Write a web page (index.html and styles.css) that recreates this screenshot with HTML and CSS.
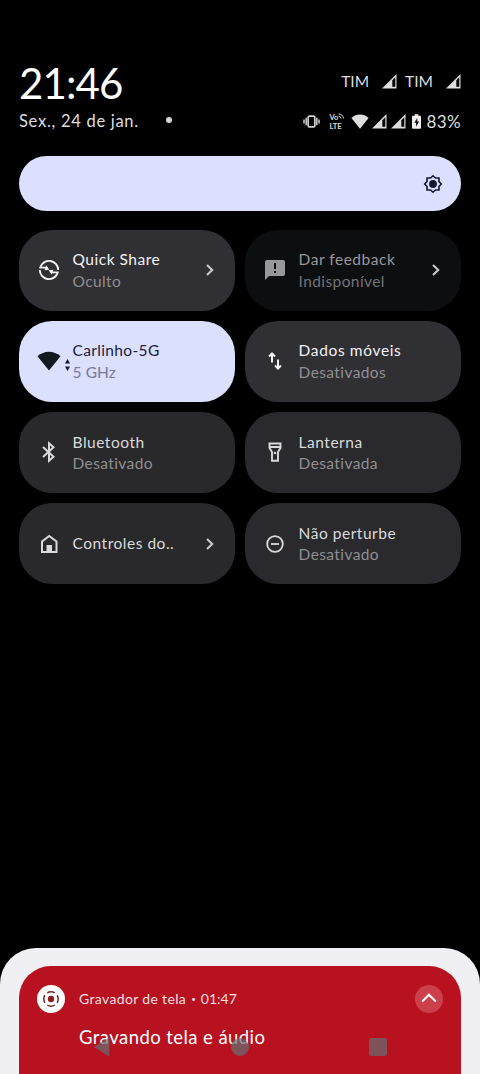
FILE: index.html
```
<!DOCTYPE html>
<html lang="pt-BR">
<head>
<meta charset="utf-8">
<title>Configurações rápidas</title>
<link rel="stylesheet" href="styles.css">
</head>
<body>
<svg class="defs" aria-hidden="true">
  <symbol id="signal" viewBox="0 0 15 15"><path d="M0 14.500 14.500 0v14.500z" fill="#dededf"/><path d="M10.300 6.200 13.300 3.200v9.600h-3z" fill="#08080a"/></symbol>
  <symbol id="chevron" viewBox="0 0 10 14"><path d="M2 2l5.200 5L2 12" fill="none" stroke="currentColor" stroke-width="2.100"/></symbol>
  <symbol id="wifi" viewBox="0 0 24 20"><path d="M.5 5.200C7.200-.8 16.800-.8 23.500 5.200L12 19.500z" fill="currentColor"/></symbol>
</svg>
<div class="screen">
  <header class="status">
    <div class="status-row top">
      <div class="clock">21:46</div>
      <div class="carriers">
        <span class="carrier">TIM</span><svg class="sig"><use href="#signal"/></svg>
        <span class="carrier second">TIM</span><svg class="sig"><use href="#signal"/></svg>
      </div>
    </div>
    <div class="status-row bottom">
      <div class="date">Sex., 24 de jan.</div>
      <span class="dot"></span>
      <div class="indicators">
        <svg class="vibrate" viewBox="0 0 17 13" fill="none" stroke="#cfcfd1"><rect x="5.200" y="1.200" width="6.600" height="10.600" rx="1" stroke-width="1.700"/><path d="M3.200 2.800v7.400M13.800 2.800v7.400" stroke-width="1.500"/><path d="M1 4.500v4M16 4.500v4" stroke-width="1.500"/></svg>
        <div class="volte"><span>Vo<svg viewBox="0 0 6 6" fill="none" stroke="#cfcfd1"><path d="M.5 1q4.500 0 5 4.500M.5 3q2 0 2.500 2.500" stroke-width="1"/></svg></span><span>LTE</span></div>
        <svg class="wifi-small"><use href="#wifi"/></svg>
        <svg class="sig a"><use href="#signal"/></svg>
        <svg class="sig b"><use href="#signal"/></svg>
        <svg class="battery" viewBox="0 0 10 16"><path d="M3 0h4v1.500h2q1 0 1 1V15q0 1-1 1H1q-1 0-1-1V2.500q0-1 1-1h2z" fill="#f0f0f0"/><path d="M5.800 4 2.500 9.500h2v4.300L7.800 8h-2z" fill="#111"/></svg>
        <span class="percent">83%</span>
      </div>
    </div>
  </header>

  <div class="brightness">
    <svg viewBox="0 0 24 24"><path d="M12 3l2.700 2.500h3.800v3.800L21 12l-2.500 2.700v3.800h-3.800L12 21l-2.700-2.500H5.500v-3.800L3 12l2.500-2.700V5.500h3.800z" fill="none" stroke="#151b2e" stroke-width="1.800"/><circle cx="12" cy="12" r="4.300" fill="#151b2e"/></svg>
  </div>

  <main class="tiles">
    <section class="tile bright">
      <svg class="icon" viewBox="0 0 24 24" fill="none" stroke="currentColor" stroke-width="1.900"><path d="M3.400 8.800A9.200 9.200 0 0 1 21.200 12M20.600 15.200A9.200 9.200 0 0 1 2.800 12"/><path d="M2.300 9.600h6.500l1.500 1M21.700 14.400h-6.500l-1.500-1"/><path d="M9.300 7.300l3 4.500-4.700.4zM14.700 16.700l-3-4.500 4.700-.4z" fill="currentColor" stroke="none"/></svg>
      <div class="label"><span class="title">Quick Share</span><span class="sub">Oculto</span></div>
      <svg class="chev"><use href="#chevron"/></svg>
    </section>
    <section class="tile disabled">
      <svg class="icon" viewBox="0 0 24 24"><path d="M4 2h16q2 0 2 2v12q0 2-2 2H6l-4 4V4q0-2 2-2z" fill="#98989a"/><path d="M11 5h2v6h-2zM11 13h2v2h-2z" fill="#09090a"/></svg>
      <div class="label"><span class="title">Dar feedback</span><span class="sub">Indisponível</span></div>
      <svg class="chev"><use href="#chevron"/></svg>
    </section>
    <section class="tile active">
      <svg class="icon wifi"><use href="#wifi"/></svg>
      <svg class="traffic" viewBox="0 0 5 12"><path d="M2.500 0 5 4.500H0zM0 7.500h5L2.500 12z" fill="#151b26"/></svg>
      <div class="label tight"><span class="title">Carlinho-5G</span><span class="sub">5 GHz</span></div>
    </section>
    <section class="tile bright">
      <svg class="icon" viewBox="0 0 24 24" fill="none" stroke="currentColor" stroke-width="2"><path d="M9 13.500V5M6 7.500l3-3 3 3M15 10.500V19M12 16.500l3 3 3-3"/></svg>
      <div class="label wide"><span class="title">Dados móveis</span><span class="sub">Desativados</span></div>
    </section>
    <section class="tile dim">
      <svg class="icon" viewBox="0 0 24 24" fill="none" stroke="currentColor" stroke-width="2"><path d="M6 7l10.500 9.700-4.500 4v-17.400l4.500 4L6 17"/></svg>
      <div class="label"><span class="title">Bluetooth</span><span class="sub">Desativado</span></div>
    </section>
    <section class="tile dim violet">
      <svg class="icon" viewBox="0 0 24 24" fill="none" stroke="currentColor" stroke-width="1.900"><path d="M6.500 3.500h11v4.500l-2.500 4v8.700H9V12L6.500 8zM6.500 7h11"/><circle cx="12" cy="13" r="1.300" fill="currentColor" stroke="none"/></svg>
      <div class="label"><span class="title">Lanterna</span><span class="sub">Desativada</span></div>
    </section>
    <section class="tile dim">
      <svg class="icon" viewBox="0 0 24 24" fill="none" stroke="currentColor" stroke-width="2"><path d="M5 20V9.500L12.200 4l7.300 5.500V20z"/><path d="M9.500 13h5.500v7H9.500z" fill="currentColor" stroke="none"/></svg>
      <div class="label"><span class="title">Controles do..</span></div>
      <svg class="chev"><use href="#chevron"/></svg>
    </section>
    <section class="tile dim violet">
      <svg class="icon" viewBox="0 0 24 24" fill="none" stroke="currentColor" stroke-width="1.800"><circle cx="12" cy="12" r="7.800"/><path d="M8 12h8"/></svg>
      <div class="label"><span class="title">Não perturbe</span><span class="sub">Desativado</span></div>
    </section>
  </main>

  <div class="sheet">
    <article class="notice">
      <div class="notice-head">
        <svg class="app" viewBox="0 0 28 28"><circle cx="14" cy="14" r="14" fill="#fff"/><circle cx="14" cy="14" r="3.200" fill="#8f1822"/><circle cx="14" cy="14" r="7.200" fill="none" stroke="#74252b" stroke-width="1.500" pathLength="80" stroke-dasharray="14 6" stroke-dashoffset="7"/></svg>
        <span class="app-name">Gravador de tela</span><span class="sep">•</span><span class="timer">01:47</span>
        <svg class="collapse" viewBox="0 0 28 28"><circle cx="14" cy="14" r="14" fill="#cc404c"/><path d="M7.200 16.500 14 9.700l6.800 6.800" fill="none" stroke="#fff" stroke-width="2"/></svg>
      </div>
      <p class="message">Gravando tela e áudio</p>
    </article>
  </div>
  <nav class="navbar">
    <svg viewBox="0 0 18 22"><path d="M0 11 16 1q1-.5 1 1v18q0 1.500-1 1z"/></svg>
    <svg viewBox="0 0 20 20"><circle cx="10" cy="10" r="10"/></svg>
    <svg viewBox="0 0 18 18"><rect width="18" height="18" rx="2.500"/></svg>
  </nav>
</div>
</body>
</html>
```
FILE: styles.css
```
* { box-sizing: border-box; }
body { margin: 0; background: #000; font-family: Lato, "Open Sans", sans-serif; font-variant-ligatures: none; }
svg { display: block; flex: none; }
.defs { position: absolute; width: 0; height: 0; }
.screen { position: relative; width: 480px; height: 1074px; overflow: hidden; padding: 60px 19px 0; display: flex; flex-direction: column; background: #000; }

.status { height: 96px; color: #dededf; }
.status-row { display: flex; align-items: center; }
.top { height: 46px; justify-content: space-between; }
.clock { font-size: 42px; line-height: 46px; color: #fff; letter-spacing: -0.900px; }
.carriers { display: flex; align-items: center; height: 42px; font-size: 15.500px; padding-bottom: 4px; }
.carrier { margin-right: 13px; }
.second { margin-left: 8px; }
.sig { width: 15px; height: 15px; }
.bottom { height: 30px; }
.date { width: 120px; font-size: 16.500px; white-space: nowrap; letter-spacing: 0.720px; }
.dot { width: 6px; height: 6px; border-radius: 50%; background: #d6d6d8; margin: -2px 0 0 27px; }
.indicators { display: flex; align-items: center; margin-left: auto; }
.vibrate { width: 17px; height: 13px; }
.volte { display: flex; flex-direction: column; width: 16px; margin-left: 9px; font-size: 7.500px; line-height: 9px; font-weight: 700; }
.volte span { display: flex; height: 8px; }
.volte span + span { margin-top: 1px; }
.volte svg { width: 6px; height: 6px; }
.wifi-small { width: 18px; height: 15px; margin-left: 6px; }
.a { margin-left: 3px; }
.b { margin-left: 4px; }
.battery { width: 9px; height: 15px; margin-left: 6px; }
.percent { margin-left: 5px; font-size: 17px; letter-spacing: 0.400px; }

.brightness { height: 55px; border-radius: 28px; background: #dcdfff; display: flex; align-items: center; justify-content: flex-end; padding-right: 17px; }
.brightness svg { width: 22px; height: 22px; }

.tiles { display: grid; grid-template-columns: 1fr 1fr; grid-auto-rows: 81px; gap: 10.200px; margin-top: 18.500px; }
.tile { position: relative; display: flex; align-items: center; padding: 0 20px 0 18px; border-radius: 33px; }
.bright { background: #302f34; color: #f2f2f4; }
.dim { background: #29292b; color: #dadadb; }
.violet { background: #2a292d; }
.disabled { background: #0d0e10; color: #98989a; }
.active { background: #dce0ff; color: #1a2142; }
.icon { width: 24px; height: 24px; }
.wifi { height: 20px; color: #121a20; }
.traffic { position: absolute; left: 46px; top: 38px; width: 5px; height: 12px; }
.label { display: flex; flex-direction: column; margin-left: 11.500px; padding-top: 1px; font-size: 15.500px; line-height: 21.300px; white-space: nowrap; letter-spacing: 0.400px; }
.title { letter-spacing: 0.520px; }
.tight .title { letter-spacing: 0.350px; }
.tight .sub { letter-spacing: 0.100px; }
.wide .title { letter-spacing: 0.640px; }
.sub { color: #8f8f92; }
.disabled .sub { color: #737376; }
.active .sub { color: #77799a; }
.chev { width: 10px; height: 14px; margin-left: auto; color: #c9c9cc; }

.sheet { position: absolute; left: 0; right: 0; bottom: 0; height: 126px; padding: 18px 19px 0; background: #f0eff4; border-radius: 36px 36px 0 0; }
.notice { height: 108px; padding: 18.500px 18px 0; background: #b81120; border-radius: 32px 32px 0 0; color: #fff; }
.notice-head { display: flex; align-items: center; height: 28px; font-size: 14px; color: #f8dfe0; }
.app, .collapse { width: 28px; height: 28px; }
.app-name { margin-left: 14px; letter-spacing: 0.350px; }
.sep { margin: 0 5px; font-size: 8px; }
.collapse { margin-left: auto; }
.message { margin: 10.500px 0 0 42px; font-size: 18.500px; line-height: 28px; letter-spacing: 0.430px; }
.navbar { position: absolute; left: 93px; bottom: 17px; width: 294px; display: flex; align-items: center; justify-content: space-between; fill: #687073; opacity: .7; }
.navbar svg { width: 18px; height: 20px; }
```
